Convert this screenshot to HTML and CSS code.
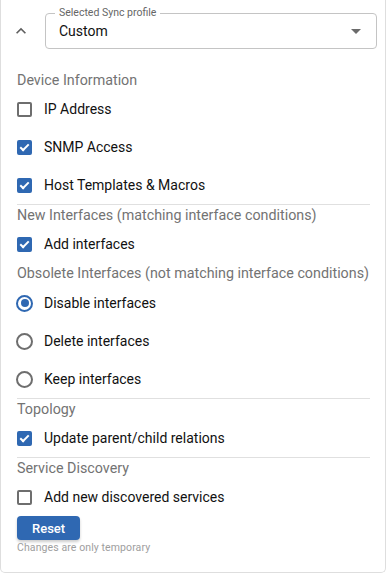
FILE: index.html
```html
<!DOCTYPE html>
<html lang="en">
<head>
  <meta charset="UTF-8" />
  <meta name="viewport" content="width=device-width, initial-scale=1.0"/>
  <title>Sync profile</title>
  <link rel="stylesheet" href="styles.css">
</head>
<body>
  <main class="card">
    <div class="profile-row">
      <svg class="collapse-icon" viewBox="0 0 24 24" width="20" height="20">
        <path d="M12 8l-6 6 1.41 1.41L12 10.83l4.59 4.58L18 14z" fill="#5f5f5f"/>
      </svg>
      <div class="select-field">
        <span class="select-label">Selected Sync profile</span>
        <span class="select-value">Custom</span>
        <svg class="select-arrow" viewBox="0 0 24 24" width="24" height="24">
          <path d="M7 10l5 5 5-5z" fill="#6b6b6b"/>
        </svg>
      </div>
    </div>

    <div class="options">
      <section class="group divided">
        <div class="group-title">Device Information</div>
        <label class="opt"><span class="box"></span>IP Address</label>
        <label class="opt"><span class="box checked"></span>SNMP Access</label>
        <label class="opt"><span class="box checked"></span>Host Templates &amp; Macros</label>
      </section>

      <section class="group">
        <div class="group-title">New Interfaces (matching interface conditions)</div>
        <label class="opt"><span class="box checked"></span>Add interfaces</label>
      </section>

      <section class="group divided">
        <div class="group-title">Obsolete Interfaces (not matching interface conditions)</div>
        <div class="radios">
          <label class="opt"><span class="radio on"></span>Disable interfaces</label>
          <label class="opt"><span class="radio"></span>Delete interfaces</label>
          <label class="opt"><span class="radio"></span>Keep interfaces</label>
        </div>
      </section>

      <section class="group divided">
        <div class="group-title">Topology</div>
        <label class="opt"><span class="box checked"></span>Update parent/child relations</label>
      </section>

      <section class="group">
        <div class="group-title">Service Discovery</div>
        <label class="opt"><span class="box"></span>Add new discovered services</label>
      </section>
    </div>

    <button class="reset-btn">Reset</button>
    <div class="hint">Changes are only temporary</div>
  </main>
</body>
</html>
```

FILE: styles.css
```css
html, body {
  margin: 0;
  background-color: #fff;
  font-family: Roboto, "Liberation Sans", Arial, sans-serif;
}

.card {
  width: 369px;
  border: 1px solid #dedede;
  border-top: none;
  border-radius: 0 0 5px 5px;
  padding: 0 15px 17px 0;
}

/* profile selector on top */
.profile-row {
  display: flex;
  align-items: center;
  padding-top: 13px;
  margin-right: -7px;
}

.collapse-icon {
  margin: 0 14px 0 10px;
  flex: none;
}

.select-field {
  position: relative;
  flex: 1;
  height: 36px;
  border: 1px solid #c4c4c4;
  border-radius: 4px;
  box-sizing: border-box;
  display: flex;
  align-items: center;
  padding-left: 13px;
}

.select-label {
  position: absolute;
  left: 9px;
  top: -7px;
  padding: 0 4px;
  background: #fff;
  font-size: 10.5px;
  line-height: 12px;
  color: #666;
}

.select-value {
  flex: 1;
  font-size: 14px;
  color: #111;
}

.select-arrow {
  margin-right: 8px;
}

/* option groups */
.options {
  margin: 21px 0 0 16px;
}

.group.divided {
  border-bottom: 1px solid #e0e0e0;
}

.group-title {
  height: 20px;
  line-height: 20px;
  font-size: 14.3px;
  color: #737373;
  white-space: nowrap;
}

.opt {
  display: flex;
  align-items: center;
  height: 38px;
  font-size: 14px;
  color: #111;
  cursor: pointer;
}

.radios {
  margin-top: 1px;
}

.box {
  width: 15px;
  height: 15px;
  box-sizing: border-box;
  border: 2px solid #6e6e6e;
  border-radius: 2px;
  margin: 0 12px 0 0;
  position: relative;
  flex: none;
}

.box.checked {
  background-color: #2f68b2;
  border-color: #2f68b2;
}

.box.checked::after {
  content: "";
  position: absolute;
  left: 3px;
  top: 0;
  width: 3px;
  height: 7px;
  border: solid #fff;
  border-width: 0 2px 2px 0;
  transform: rotate(45deg);
}

.radio {
  width: 17px;
  height: 17px;
  box-sizing: border-box;
  border: 2px solid #6e6e6e;
  border-radius: 50%;
  margin: 0 11px 0 -1px;
  position: relative;
  flex: none;
}

.radio.on {
  border-color: #2f68b2;
}

.radio.on::after {
  content: "";
  position: absolute;
  left: 2.5px;
  top: 2.5px;
  width: 8px;
  height: 8px;
  border-radius: 50%;
  background-color: #2f68b2;
}

.reset-btn {
  display: block;
  margin: 0 0 0 16px;
  height: 24px;
  padding: 0 15px;
  border: none;
  border-radius: 4px;
  background-color: #2f68b2;
  color: #fff;
  font-family: inherit;
  font-size: 13px;
  font-weight: 500;
  box-shadow: 0 2px 3px rgba(0, 0, 0, 0.2);
  cursor: pointer;
}

.hint {
  margin: 1px 0 0 16px;
  font-size: 10.5px;
  line-height: 14px;
  letter-spacing: 0.1px;
  color: #9e9e9e;
}
```
